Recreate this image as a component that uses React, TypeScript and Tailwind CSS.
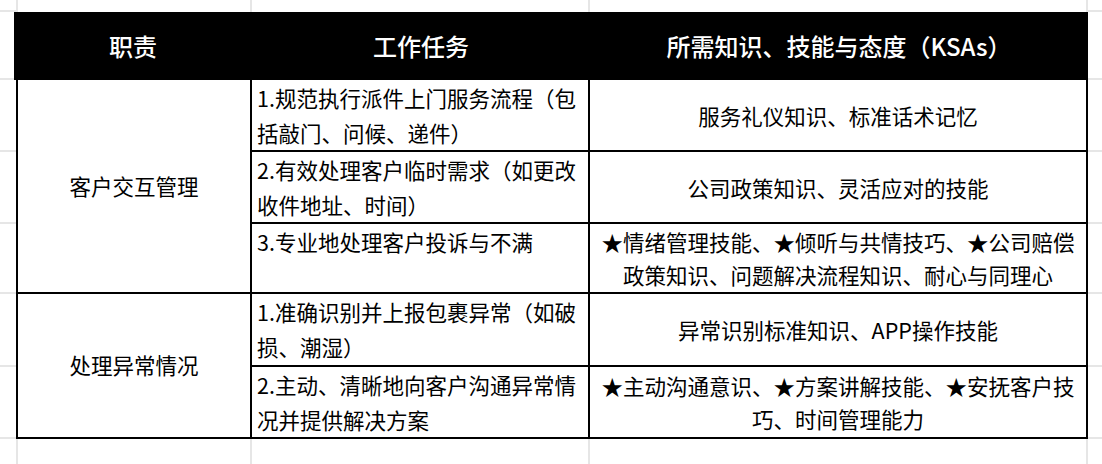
import React from "react";

const grey = "border-[#e6e6e6]";

const tasks = [
  {
    row: "row-start-3",
    lines: ["1.规范执行派件上门服务流程（包", "括敲门、问候、递件）"],
    ksa: ["服务礼仪知识、标准话术记忆"],
  },
  {
    row: "row-start-4",
    lines: ["2.有效处理客户临时需求（如更改", "收件地址、时间）"],
    ksa: ["公司政策知识、灵活应对的技能"],
  },
  {
    row: "row-start-5",
    lines: ["3.专业地处理客户投诉与不满"],
    ksa: ["★情绪管理技能、★倾听与共情技巧、★公司赔偿", "政策知识、问题解决流程知识、耐心与同理心"],
  },
  {
    row: "row-start-6",
    lines: ["1.准确识别并上报包裹异常（如破", "损、潮湿）"],
    ksa: ["异常识别标准知识、APP操作技能"],
  },
  {
    row: "row-start-7",
    lines: ["2.主动、清晰地向客户沟通异常情", "况并提供解决方案"],
    ksa: ["★主动沟通意识、★方案讲解技能、★安抚客户技", "巧、时间管理能力"],
  },
];

const marginRows = ["row-start-2", "row-start-3", "row-start-4", "row-start-5", "row-start-6", "row-start-7"];

export default function App() {
  return (
    <div
      className="w-[1102px] h-[464px] bg-white overflow-hidden grid grid-cols-[16px_236px_338px_498px_1fr] grid-rows-[12px_68px_72px_72px_70px_73px_72px_25px] text-black"
      style={{ fontFamily: '"Noto Sans CJK SC", "Noto Sans", sans-serif' }}
    >
      {/* spreadsheet grid: top strip */}
      <div className={`row-start-1 col-start-1 border-b-2 ${grey}`} />
      <div className={`row-start-1 col-start-2 border-l-2 border-r-2 ${grey}`} />
      <div className={`row-start-1 col-start-3 border-r-2 ${grey}`} />
      <div className={`row-start-1 col-start-4 border-r-2 ${grey}`} />
      <div className={`row-start-1 col-start-5 border-b-2 ${grey}`} />

      {/* spreadsheet grid: side margins */}
      {marginRows.map((r) => (
        <React.Fragment key={r}>
          <div className={`${r} col-start-1 border-b-2 ${grey}`} />
          <div className={`${r} col-start-5 border-b-2 ${grey}`} />
        </React.Fragment>
      ))}

      {/* spreadsheet grid: bottom strip */}
      <div className="row-start-8 col-start-1" />
      <div className={`row-start-8 col-start-2 border-l-2 border-r-2 ${grey}`} />
      <div className={`row-start-8 col-start-3 border-r-2 ${grey}`} />
      <div className={`row-start-8 col-start-4 border-r-2 ${grey}`} />
      <div className="row-start-8 col-start-5" />

      {/* header */}
      <div className="row-start-2 col-start-2 -ml-[2px] bg-black text-white text-[24px] font-medium flex items-center justify-center">
        职责
      </div>
      <div className="row-start-2 col-start-3 bg-black text-white text-[24px] font-medium flex items-center justify-center">
        工作任务
      </div>
      <div className="row-start-2 col-start-4 bg-black text-white text-[24px] font-medium flex items-center justify-center">
        所需知识、技能与态度（KSAs）
      </div>

      {/* duties */}
      <div className="row-start-3 row-span-3 col-start-2 border-l-2 border-r-2 border-b-2 border-black flex items-center justify-center text-[21.5px]">
        客户交互管理
      </div>
      <div className="row-start-6 row-span-2 col-start-2 border-l-2 border-r-2 border-b-2 border-black flex items-center justify-center text-[21.5px]">
        处理异常情况
      </div>

      {/* tasks and KSAs */}
      {tasks.map((t) => (
        <React.Fragment key={t.lines[0]}>
          <div className={`${t.row} col-start-3 border-r-2 border-b-2 border-black pl-[5px] text-[21.5px] leading-[35px] whitespace-nowrap`}>
            {t.lines.map((l) => (
              <div key={l}>{l}</div>
            ))}
          </div>
          <div className={`${t.row} col-start-4 border-r-2 border-b-2 border-black flex flex-col items-center justify-center text-[21.5px] leading-[33px] whitespace-nowrap`}>
            {t.ksa.map((l) => (
              <div key={l}>{l}</div>
            ))}
          </div>
        </React.Fragment>
      ))}
    </div>
  );
}
